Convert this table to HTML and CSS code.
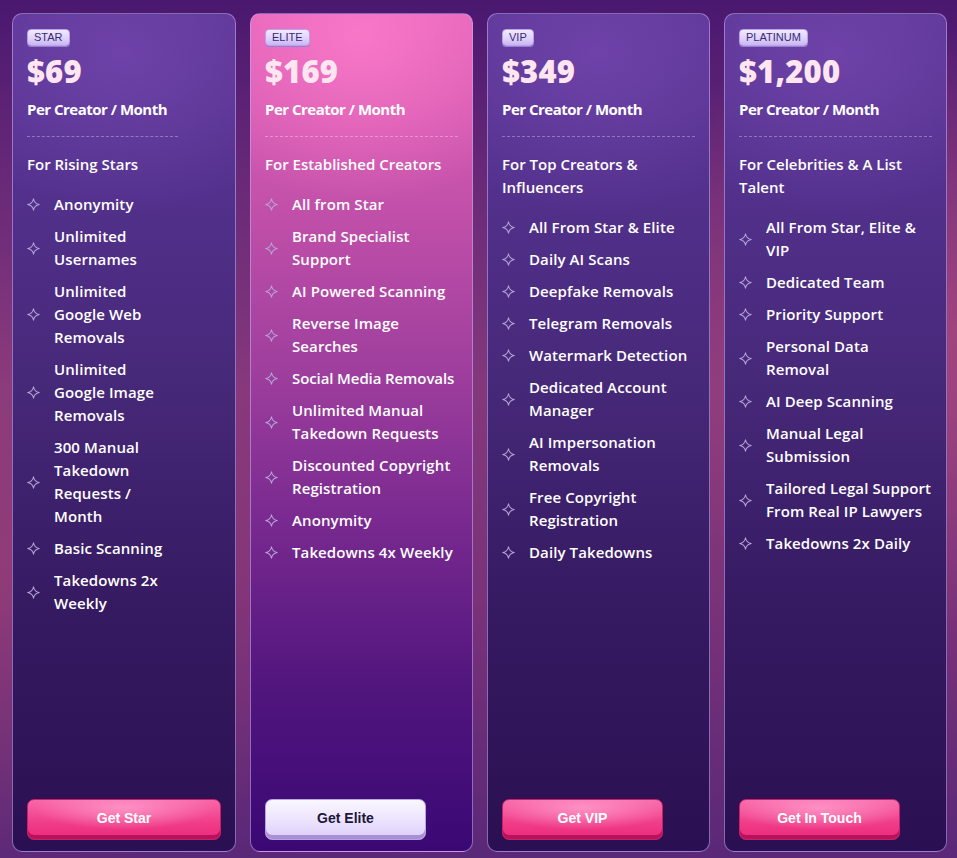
FILE: index.html
```html
<!DOCTYPE html>
<html lang="en">
<head>
<meta charset="utf-8">
<title>Pricing</title>
<link rel="stylesheet" href="styles.css">
</head>
<body>
<svg width="0" height="0" class="defs">
  <defs>
    <symbol id="spark" viewBox="0 0 14 14">
      <path d="M7 0.8 Q7.9 6.1 13.2 7 Q7.9 7.9 7 13.2 Q6.1 7.9 0.8 7 Q6.1 6.1 7 0.8Z" fill="none" stroke="currentColor" stroke-width="1.1" stroke-linejoin="round"/>
    </symbol>
  </defs>
</svg>
<main class="plans">
  <section class="card card-star">
    <span class="badge">STAR</span>
    <div class="price">$69</div>
    <div class="per">Per Creator / Month</div>
    <hr class="divider">
    <p class="tagline">For Rising Stars</p>
    <ul class="features">
      <li><svg class="ico"><use href="#spark"/></svg><span>Anonymity</span></li>
      <li><svg class="ico"><use href="#spark"/></svg><span>Unlimited Usernames</span></li>
      <li><svg class="ico"><use href="#spark"/></svg><span>Unlimited Google Web Removals</span></li>
      <li><svg class="ico"><use href="#spark"/></svg><span>Unlimited Google Image Removals</span></li>
      <li><svg class="ico"><use href="#spark"/></svg><span>300 Manual Takedown Requests / Month</span></li>
      <li><svg class="ico"><use href="#spark"/></svg><span>Basic Scanning</span></li>
      <li><svg class="ico"><use href="#spark"/></svg><span>Takedowns 2x Weekly</span></li>
    </ul>
    <button class="btn btn-pink btn-wide">Get Star</button>
  </section>

  <section class="card card-elite">
    <span class="badge">ELITE</span>
    <div class="price">$169</div>
    <div class="per">Per Creator / Month</div>
    <hr class="divider">
    <p class="tagline">For Established Creators</p>
    <ul class="features">
      <li><svg class="ico"><use href="#spark"/></svg><span>All from Star</span></li>
      <li><svg class="ico"><use href="#spark"/></svg><span>Brand Specialist Support</span></li>
      <li><svg class="ico"><use href="#spark"/></svg><span>AI Powered Scanning</span></li>
      <li><svg class="ico"><use href="#spark"/></svg><span>Reverse Image Searches</span></li>
      <li><svg class="ico"><use href="#spark"/></svg><span class="one-line">Social Media Removals</span></li>
      <li><svg class="ico"><use href="#spark"/></svg><span>Unlimited Manual Takedown Requests</span></li>
      <li><svg class="ico"><use href="#spark"/></svg><span>Discounted Copyright Registration</span></li>
      <li><svg class="ico"><use href="#spark"/></svg><span>Anonymity</span></li>
      <li><svg class="ico"><use href="#spark"/></svg><span>Takedowns 4x Weekly</span></li>
    </ul>
    <button class="btn btn-light">Get Elite</button>
  </section>

  <section class="card">
    <span class="badge">VIP</span>
    <div class="price">$349</div>
    <div class="per">Per Creator / Month</div>
    <hr class="divider">
    <p class="tagline">For Top Creators &amp; Influencers</p>
    <ul class="features">
      <li><svg class="ico"><use href="#spark"/></svg><span>All From Star &amp; Elite</span></li>
      <li><svg class="ico"><use href="#spark"/></svg><span>Daily AI Scans</span></li>
      <li><svg class="ico"><use href="#spark"/></svg><span>Deepfake Removals</span></li>
      <li><svg class="ico"><use href="#spark"/></svg><span>Telegram Removals</span></li>
      <li><svg class="ico"><use href="#spark"/></svg><span>Watermark Detection</span></li>
      <li><svg class="ico"><use href="#spark"/></svg><span>Dedicated Account Manager</span></li>
      <li><svg class="ico"><use href="#spark"/></svg><span>AI Impersonation Removals</span></li>
      <li><svg class="ico"><use href="#spark"/></svg><span>Free Copyright Registration</span></li>
      <li><svg class="ico"><use href="#spark"/></svg><span>Daily Takedowns</span></li>
    </ul>
    <button class="btn btn-pink">Get VIP</button>
  </section>

  <section class="card">
    <span class="badge">PLATINUM</span>
    <div class="price">$1,200</div>
    <div class="per">Per Creator / Month</div>
    <hr class="divider">
    <p class="tagline">For Celebrities &amp; A List Talent</p>
    <ul class="features">
      <li><svg class="ico"><use href="#spark"/></svg><span>All From Star, Elite &amp; VIP</span></li>
      <li><svg class="ico"><use href="#spark"/></svg><span>Dedicated Team</span></li>
      <li><svg class="ico"><use href="#spark"/></svg><span>Priority Support</span></li>
      <li><svg class="ico"><use href="#spark"/></svg><span>Personal Data Removal</span></li>
      <li><svg class="ico"><use href="#spark"/></svg><span>AI Deep Scanning</span></li>
      <li><svg class="ico"><use href="#spark"/></svg><span>Manual Legal Submission</span></li>
      <li><svg class="ico"><use href="#spark"/></svg><span>Tailored Legal Support From Real IP Lawyers</span></li>
      <li><svg class="ico"><use href="#spark"/></svg><span>Takedowns 2x Daily</span></li>
    </ul>
    <button class="btn btn-pink">Get In Touch</button>
  </section>
</main>
</body>
</html>
```

FILE: styles.css
```css
html, body {
  margin: 0;
  padding: 0;
}

body {
  width: 957px;
  height: 858px;
  overflow: hidden;
  font-family: "Open Sans", "Noto Sans", sans-serif;
  background:
    radial-gradient(ellipse 420px 300px at 960px 330px, rgba(190, 80, 130, 0.55), rgba(190, 80, 130, 0) 100%),
    radial-gradient(ellipse 380px 320px at 0px 560px, rgba(170, 70, 120, 0.45), rgba(170, 70, 120, 0) 100%),
    linear-gradient(180deg, #4a1870 0%, #6a2a78 22%, #84387c 45%, #7a3278 70%, #5a2878 100%);
}

.defs {
  position: absolute;
  width: 0;
  height: 0;
}

.plans {
  display: flex;
  gap: 14px;
  padding: 13px 10px 0 12px;
  height: 839px;
}

.card {
  box-sizing: border-box;
  width: 223px;
  flex: none;
  display: flex;
  flex-direction: column;
  align-items: flex-start;
  padding: 15px 14px 11px 14px;
  border: 1px solid rgba(196, 166, 240, 0.6);
  border-radius: 10px;
  color: #fff;
  background:
    radial-gradient(ellipse 200px 160px at 110px 40px, rgba(112, 68, 170, 0.9), rgba(112, 68, 170, 0) 100%),
    linear-gradient(180deg, #5c3596 0%, #53318d 20%, #462878 45%, #361a62 70%, #2a1052 100%);
}

.card-star {
  width: 224px;
}

.card-star .divider,
.card-star .features,
.card-star .tagline {
  width: 151px;
}

.card-elite {
  background:
    radial-gradient(ellipse 200px 170px at 110px 20px, rgba(250, 120, 200, 0.95), rgba(250, 120, 200, 0) 100%),
    linear-gradient(180deg, #e062b8 0%, #c451aa 22%, #a03f9e 42%, #7a2a90 60%, #52167e 80%, #3a0874 100%);
}

.badge {
  display: inline-block;
  height: 15px;
  padding: 0 6px;
  font-family: "Liberation Sans", Arial, sans-serif;
  font-size: 11px;
  line-height: 15px;
  color: #3a2a72;
  background: linear-gradient(180deg, #f1e9ff 0%, #ddd0fb 60%, #c9b6f1 100%);
  border: 1px solid #b9a2e8;
  border-radius: 4px;
  box-shadow: 0 1px 0 #9a7fd0;
}

.price {
  margin-top: 7px;
  font-size: 31px;
  font-weight: 800;
  line-height: 36px;
  color: #fde6f0;
  letter-spacing: 0.2px;
}

.per {
  margin-top: 9px;
  font-size: 15px;
  font-weight: 700;
  line-height: 22px;
  letter-spacing: -0.5px;
}

.divider {
  align-self: stretch;
  margin: 16px 0 0;
  border: 0;
  border-top: 1px dashed rgba(255, 255, 255, 0.32);
  height: 0;
}

.card-star .divider {
  align-self: flex-start;
}

.tagline {
  margin: 16px 0 0;
  font-size: 15px;
  font-weight: 600;
  line-height: 23px;
}

.features {
  list-style: none;
  margin: 17px 0 0;
  padding: 0;
  display: flex;
  flex-direction: column;
  gap: 9px;
  align-self: stretch;
}

.features li {
  display: flex;
  align-items: center;
  gap: 14px;
  font-size: 15px;
  font-weight: 600;
  line-height: 23px;
  letter-spacing: 0.1px;
}

.one-line {
  white-space: nowrap;
  letter-spacing: -0.1px;
}

.ico {
  flex: none;
  width: 13px;
  height: 13px;
  color: #b6a4d8;
}

.btn {
  margin-top: auto;
  width: 161px;
  height: 41px;
  border-radius: 7px;
  font-family: "Liberation Sans", Arial, sans-serif;
  font-size: 14px;
  font-weight: 700;
  padding: 0 0 4px;
  cursor: pointer;
}

.btn-wide {
  width: 194px;
}

.btn-pink {
  color: #fff;
  border: 1px solid #c5206a;
  background:
    radial-gradient(ellipse 90px 22px at 50% 20%, rgba(255, 150, 200, 0.9), rgba(255, 150, 200, 0) 100%),
    linear-gradient(180deg, #f868a8 0%, #f03c88 60%, #ec2a7c 100%);
  box-shadow: inset 0 -4px 0 #b8125a;
}

.btn-light {
  color: #1c1838;
  border: 1px solid #b8a4e0;
  background: linear-gradient(180deg, #faf7ff 0%, #ece2ff 55%, #dccdf6 100%);
  box-shadow: inset 0 -4px 0 #a88fd4;
}
```
